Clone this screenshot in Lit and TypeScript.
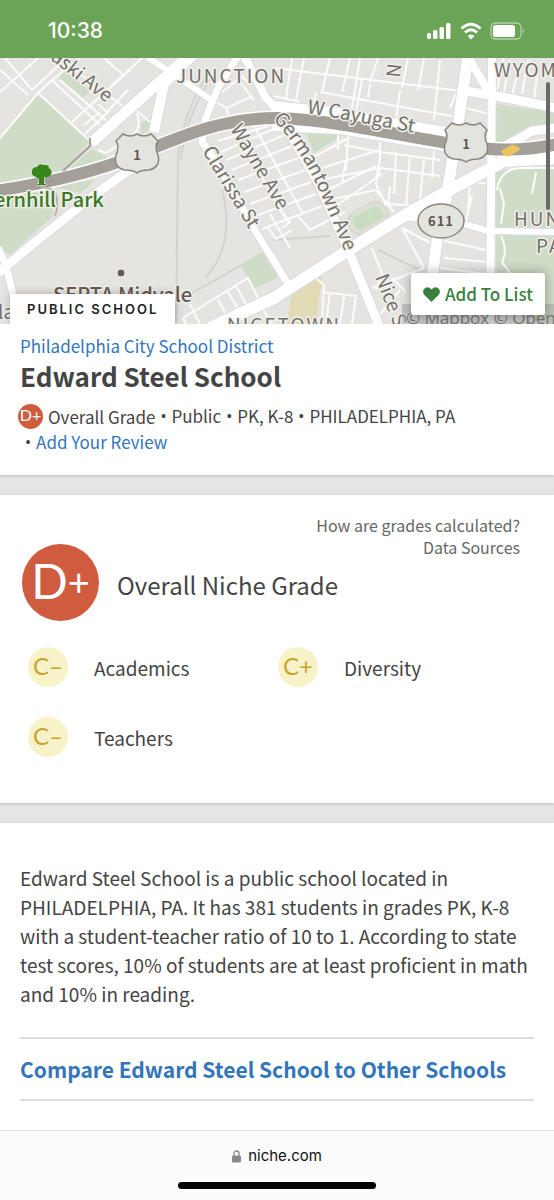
import { LitElement, html, svg, css } from "lit";
import { customElement, property } from "lit/decorators.js";

@customElement("grade-badge")
class GradeBadge extends LitElement {
  @property() grade = "";
  @property({ reflect: true }) size = "medium";

  static styles = css`
    :host {
      box-sizing: border-box;
      display: inline-flex;
      flex: none;
      align-items: center;
      justify-content: center;
      width: 40px;
      height: 40px;
      padding-bottom: 2px;
      border-radius: 50%;
      background: #f8f2c8;
      color: #c4a52e;
      font-family: Lato, "Noto Sans", sans-serif;
      font-size: 24px;
      line-height: 1;
    }
    :host([size="large"]) {
      width: 77px;
      height: 77px;
      padding-bottom: 4px;
      background: #cf5c3f;
      color: #fff;
      font-size: 48px;
    }
    :host([size="small"]) {
      width: 25px;
      height: 25px;
      background: #cf5c3f;
      color: #fff;
      font-size: 16px;
    }
    :host([size="large"]) .sign {
      font-size: 38px;
    }
  `;

  render() {
    return html`<span>${this.grade[0]}</span><span class="sign">${this.grade.slice(1)}</span>`;
  }
}

const MINOR_STREETS = [
  "M0 70 L28 95 M0 138 L38 93 L90 141 M5 58 L32 90 M0 92 L38 58 M32 90 L75 50 M38 93 L52 80 L80 58 M52 80 L100 125",
  "M60 80 L108 122 M70 66 L125 108 M72 122 L142 58 M90 106 L130 70 M98 104 L107 112 L128 90 M84 125 L100 112 M84 135 L110 110",
  "M98 150 L106 153 L133 135 Q142 128 137 114 M128 104 L150 122 M104 58 L122 74",
  "M210 98 L226 108 L229 116 M227 108 L253 96 M233 66 L250 85 M222 92 L240 78 M240 82 L254 100",
  "M215 130 L250 124 M218 141 L268 126 M221 152 L276 128 M226 160 L284 135 M232 170 L292 146 M238 180 L298 158 M244 192 L305 170 M250 204 L311 182 M255 216 L316 194 M262 229 L322 206",
  "M232 126 L288 222 M252 122 L302 212 M270 214 L290 248 M267 226 L276 239 L292 230",
  "M274 68 L470 92 M320 92 L462 118 M274 96 L300 102 M292 58 L286 98 M304 58 L296 100 M330 58 L322 92 M316 92 L314 106 M360 58 L352 108 M378 58 L370 82 M400 90 L396 120 M408 58 L402 88 M424 58 L418 90 M440 60 L434 120 M362 80 L356 112 M350 58 L342 92",
  "M370 84 L368 98 M466 108 L488 114 M466 72 L450 108 M338 128 L338 150 M348 135 L346 170 M344 145 L380 152 L440 160 M380 140 L380 160 L376 178 M312 158 L352 136 M322 168 L380 150 M320 180 L380 168 L440 176 M346 160 L342 182",
  "M380 168 L376 184 L386 206 M396 152 L394 194 M410 155 L406 206 M424 160 L420 200 M434 150 L432 178 M328 190 L376 166 M328 200 L376 190 M336 206 L382 174",
  "M376 190 L394 212 M390 186 L388 204 L420 206 M276 205 L290 222 L282 228 M298 216 L310 230 L345 212 M372 248 L382 274 L376 290 M372 288 L424 268 M402 228 L424 268 M402 228 L432 244",
  "M440 240 L486 250 M444 258 L486 262 M440 268 L486 274 M472 195 L466 222 M470 185 L468 208 M474 182 L490 184 M312 275 L324 285 L322 324 M322 292 L356 296 L352 324 M330 292 L326 324 M344 296 L340 324 M400 290 L372 324 M392 278 L406 292",
  "M183 318 L248 278 L258 298 M190 304 L200 324 M218 300 L230 322 M228 292 L240 312 M236 286 L248 308 M183 318 L188 328 M262 308 L272 324 M510 60 L504 92 M528 60 L522 94 M516 78 L512 96",
  "M503 58 L497 90 M538 70 L534 98 M497 190 Q500 170 518 168 L554 168 M500 188 L504 204 L501 224 M501 236 Q508 250 502 262 L512 276 M536 172 L532 194",
];

const ARTERIALS = [
  { d: "M91 143 L182 62 L200 50", w: 11 },
  { d: "M154 132 L158 112 L164 84 L194 54", w: 10 },
  { d: "M147 57 L170 72 L210 99", w: 6 },
  { d: "M238 56 L218 88 L205 120 L202 142 L212 155 L256 232 L288 284", w: 7 },
  { d: "M244 56 L266 98 L280 112", w: 8 },
  { d: "M-2 273 L34 243 L90 198 L132 168", w: 9 },
  { d: "M-2 248 L6 266 L14 298", w: 7 },
  { d: "M272 106 L330 112 L400 124 L450 133", w: 10 },
  { d: "M272 128 L340 131 L400 141 L450 149", w: 6 },
  { d: "M280 116 L318 182 L350 254 L379 326", w: 9 },
  { d: "M210 328 L274 298 L347 251 L407 214 L446 192 L504 161 L556 158", w: 12 },
  { d: "M468 56 L459 118 L447 194 L437 240 L431 286", w: 11 },
  { d: "M470 60 L492 98", w: 8 },
  { d: "M466 91 L507 98 L556 108", w: 9 },
  { d: "M492 56 L490 326", w: 8 },
  { d: "M404 217 L461 223 L488 231 L556 232", w: 6 },
  { d: "M506 146 L532 131 L556 128", w: 9 },
  { d: "M272 255 L286 280", w: 5 },
];

const HIGHWAY =
  "M-4 191 Q80 178 134 156 C190 132 230 117 282 118 C340 121 410 138 466 146 Q510 154 558 144";

@customElement("area-map")
class AreaMap extends LitElement {
  static styles = css`
    :host {
      display: block;
    }
    .map {
      display: block;
      width: 100%;
      height: 100%;
      font-family: "Noto Sans CJK SC", "Noto Sans", sans-serif;
    }
    .minor {
      fill: none;
      stroke: #fcfcfb;
      stroke-width: 2;
    }
    .casing {
      fill: none;
      stroke: #dadae6;
    }
    .road {
      fill: none;
      stroke: #fff;
    }
    .park {
      fill: #cfdcc7;
    }
    .rail {
      fill: none;
      stroke: #d3d2cd;
      stroke-width: 2;
    }
    .label {
      fill: #74706a;
      stroke: #f1f0ed;
      stroke-width: 3px;
      stroke-linejoin: round;
      paint-order: stroke;
      font-size: 19px;
    }
    .place {
      letter-spacing: 2px;
    }
    .green {
      fill: #39781f;
      font-size: 20px;
      font-weight: 500;
    }
    .dark {
      fill: #665a50;
      font-size: 20px;
      font-weight: 500;
    }
    .shield {
      fill: #e3e4de;
      stroke: #8b857e;
      stroke-width: 1.5;
    }
    .route {
      fill: #5d564f;
      font-size: 13px;
      font-weight: 700;
      text-anchor: middle;
    }
  `;

  private shield(x: number, y: number) {
    return svg`<g transform="translate(${x} ${y})">
      <path class="shield" d="M-14 -20 Q-7 -16 0 -20 Q7 -16 14 -20 L21 -13 Q17 -7 21 1 Q24 13 12 16 Q4 16 0 19 Q-4 16 -12 16 Q-24 13 -21 1 Q-17 -7 -21 -13 Z"></path>
      <text class="route" y="6">1</text>
    </g>`;
  }

  render() {
    return html`
      <svg class="map" viewBox="0 58 554 266" preserveAspectRatio="xMidYMid slice" role="img" aria-label="Map of the area around the school">
        <rect x="-400" y="-200" width="1400" height="800" fill="#e5e4e1"></rect>
        <g class="park">
          <path d="M38 93 L90 141 L63 171 L0 184 V138 Z"></path>
          <path d="M64 70 L90 91 L83 98 L59 78 Z"></path>
          <path d="M66 171 L92 149 L110 159 Z"></path>
          <path d="M0 194 L48 186 L54 215 L10 255 L0 248 Z M50 186 L95 180 L80 193 Z"></path>
          <path d="M140 124 L150 118 L152 128 L142 134 Z"></path>
          <path d="M304 128 L349 131 L314 153 Z"></path>
          <path d="M496 104 L554 112 V128 L514 146 L496 144 Z"></path>
          <path d="M496 171 L554 166 V324 L530 318 L496 270 Z"></path>
          <path d="M240 265 L263 252 L277 278 L255 288 Z"></path>
          <path d="M272 262 L280 274 L272 280 Z"></path>
        </g>
        <path d="M292 288 L322 274 L316 326 H287 Z" fill="#e1dcb6"></path>
        <g transform="rotate(-28 368 218)">
          <rect x="347" y="206" width="42" height="24" rx="12" fill="#dcdfd4" stroke="#cbd3c2"></rect>
          <rect x="353" y="211" width="30" height="14" rx="4" fill="#c9dcc2"></rect>
        </g>
        <path class="rail" d="M176 326 L178 160 Q180 120 208 74 M181 160 Q184 120 212 76 M222 190 Q236 245 205 278 M180 300 L240 266 M274 240 L330 236 M378 250 L420 270"></path>
        ${MINOR_STREETS.map((d) => svg`<path class="minor" d=${d}></path>`)}
        ${ARTERIALS.map((r) => svg`<path class="casing" d=${r.d} stroke-width=${r.w + 2}></path>`)}
        ${ARTERIALS.map((r) => svg`<path class="road" d=${r.d} stroke-width=${r.w}></path>`)}
        <path class="road" d=${HIGHWAY} stroke-width="15"></path>
        <path d=${HIGHWAY} fill="none" stroke="#a59f9a" stroke-width="12"></path>
        <path d="M63 171 L90 146 V138" fill="none" stroke="#a59f9a" stroke-width="2"></path>
        <path d="M40 186 L54 190 Q60 202 55 216" fill="none" stroke="#b8b3ae" stroke-width="2"></path>
        <path d="M504 152 L513 147 L517 149 L508 154 Z" fill="#eac45c" stroke="#eac45c" stroke-width="5" stroke-linejoin="round"></path>

        <path id="cayuga" d="M307 113 Q360 122 430 136" fill="none"></path>
        <path id="germantown" d="M273 119 Q302 152 318 188 Q336 228 352 270" fill="none"></path>
        <path id="wayne" d="M230 129 L290 230" fill="none"></path>
        <path id="clarissa" d="M202 151 L264 254" fill="none"></path>
        <path id="nice" d="M375 277 L404 352" fill="none"></path>

        <text class="label place" x="176" y="83">JUNCTION</text>
        <text class="label place" x="494" y="77">WYOMING</text>
        <text class="label place" x="514" y="226">HUNTING</text>
        <text class="label place" x="536" y="253">PARK</text>
        <text class="label place" x="227" y="332">NICETOWN</text>
        <text class="label" transform="translate(50 59) rotate(38)">aski Ave</text>
        <text class="label" transform="translate(400 78) rotate(-84)">N 17th</text>
        <text class="label"><textPath href="#cayuga">W Cayuga St</textPath></text>
        <text class="label"><textPath href="#germantown">Germantown Ave</textPath></text>
        <text class="label"><textPath href="#wayne">Wayne Ave</textPath></text>
        <text class="label"><textPath href="#clarissa">Clarissa St</textPath></text>
        <text class="label"><textPath href="#nice">Nice St</textPath></text>
        <text class="label" x="-2" y="319">la</text>
        <text class="label green" x="-6" y="207">ernhill Park</text>
        <text class="label dark" x="53" y="302">SEPTA Midvale</text>
        <circle cx="121" cy="273" r="4" fill="#665a50" stroke="#f1f0ed"></circle>

        <path fill="#39861d" stroke="#eef2ea" stroke-width="1" paint-order="stroke" d="M39 184 V179 L34 176 Q31 175 32 171 Q32 167 37 167 Q39 163 43 165 Q49 164 49 168 Q53 171 51 175 Q48 179 44 177 V184 H46 V185 H37 V184 Z"></path>
        ${this.shield(137, 154)} ${this.shield(466, 143)}
        <ellipse cx="441" cy="221" rx="23" ry="17" class="shield"></ellipse>
        <text class="route" x="441" y="226" letter-spacing="1">611</text>
      </svg>
    `;
  }
}

@customElement("app-root")
class AppRoot extends LitElement {
  static styles = css`
    :host {
      display: flex;
      flex-direction: column;
      min-height: 100vh;
      background: #e5e5e5;
      color: #444;
      font-family: "Noto Sans CJK SC", "Noto Sans", sans-serif;
      font-size: 17px;
      line-height: 25px;
    }
    * {
      box-sizing: border-box;
    }
    h1,
    h2,
    p,
    ul {
      margin: 0;
      padding: 0;
      font-weight: inherit;
    }
    a {
      color: #3375bb;
      text-decoration: none;
    }
    .status {
      display: flex;
      align-items: center;
      justify-content: space-between;
      height: 58px;
      padding: 4px 28px 0 48px;
      background: #6ba357;
      color: #fff;
      font: 500 21px/24px Inter, sans-serif;
    }
    .status-icons {
      display: flex;
      align-items: center;
      gap: 8px;
    }
    .hero {
      position: relative;
      height: 266px;
      overflow: hidden;
    }
    .map {
      height: 100%;
    }
    .tag {
      position: absolute;
      left: 10px;
      bottom: 0;
      padding: 0 17px;
      background: #fff;
      box-shadow: 0 0 10px rgba(0, 0, 0, 0.25);
      color: #222;
      font: 600 13px/30px Inter, sans-serif;
      letter-spacing: 2px;
    }
    .attribution {
      position: absolute;
      left: 402px;
      right: 0;
      bottom: 0;
      height: 20px;
      padding-left: 4px;
      overflow: hidden;
      background: rgba(160, 160, 160, 0.5);
      color: #777;
      font: 17px/28px "Open Sans", sans-serif;
      white-space: nowrap;
    }
    .add {
      position: absolute;
      right: 9px;
      bottom: 9px;
      display: flex;
      align-items: center;
      gap: 5px;
      height: 42px;
      padding: 0 12px;
      border: 0;
      border-radius: 3px;
      background: #fff;
      box-shadow: 0 0 12px rgba(0, 0, 0, 0.35);
      color: #37803f;
      font: 500 17px/24px "Noto Sans CJK SC", sans-serif;
      white-space: nowrap;
    }
    .scroll-thumb {
      position: absolute;
      top: 24px;
      right: 4px;
      width: 4px;
      height: 128px;
      border-radius: 2px;
      background: #6a6a68;
    }
    .card {
      background: #fff;
      box-shadow: 0 1px 3px rgba(0, 0, 0, 0.2);
    }
    .intro {
      padding: 9px 20px 20px;
      margin-bottom: 20px;
    }
    .name {
      margin: 1px 0 10px;
      font-size: 26px;
      font-weight: 700;
      line-height: 34px;
    }
    .facts {
      display: flex;
      flex-wrap: wrap;
      align-items: center;
      column-gap: 5px;
      margin-left: -2px;
      list-style: none;
    }
    .facts li {
      display: flex;
      align-items: baseline;
      gap: 5px;
    }
    .facts .overall-grade {
      align-items: center;
    }
    .facts li + li::before {
      content: "•";
      font-family: Roboto, sans-serif;
      font-size: 18px;
    }
    .facts .review {
      flex-basis: 100%;
      padding-left: 7px;
    }
    .grades {
      padding: 19px 20px 46px;
      margin-bottom: 20px;
    }
    .notes {
      display: flex;
      flex-direction: column;
      align-items: flex-end;
      padding-right: 14px;
      font-size: 16px;
      line-height: 22px;
    }
    .notes a {
      color: #666;
    }
    .overall {
      display: flex;
      align-items: center;
      gap: 18px;
      padding-left: 2px;
      margin-top: -14px;
      font-size: 24px;
      line-height: 30px;
    }
    .overall h2 {
      padding-top: 4px;
      font-size: inherit;
    }
    .subjects {
      display: grid;
      grid-template-columns: 250px 1fr;
      row-gap: 30px;
      padding-left: 8px;
      margin-top: 26px;
      font-size: 19px;
      list-style: none;
    }
    .subjects li {
      display: flex;
      align-items: center;
      gap: 26px;
    }
    .about {
      flex: 1;
      padding: 40px 20px 27px;
    }
    .summary {
      font-size: 19px;
      line-height: 29px;
    }
    .compare {
      display: block;
      margin-top: 29px;
      padding: 15px 0;
      border: solid #ddd;
      border-width: 2px 0;
      font-size: 21px;
      font-weight: 700;
      line-height: 30px;
    }
    .browser {
      display: flex;
      flex-direction: column;
      align-items: center;
      justify-content: space-between;
      height: 70px;
      padding: 15px 0 11px;
      border-top: 1px solid #e0e0e0;
      background: #fcfcfc;
      color: #111;
      font: 15px/20px Inter, sans-serif;
    }
    .address {
      display: flex;
      align-items: center;
      gap: 7px;
    }
    .home {
      width: 198px;
      height: 7px;
      border-radius: 4px;
      background: #000;
    }
  `;

  private subjects = [
    { grade: "C–", name: "Academics" },
    { grade: "C+", name: "Diversity" },
    { grade: "C–", name: "Teachers" },
  ];

  render() {
    return html`
      <header class="status">
        <time>10:38</time>
        <div class="status-icons">
          <svg width="26" height="18" viewBox="0 0 26 18" fill="#fff">
            <rect x="1" y="11" width="4" height="6" rx="1.5"></rect>
            <rect x="7" y="8" width="4.500" height="9" rx="1.5"></rect>
            <rect x="13.500" y="5" width="4.500" height="12" rx="1.5"></rect>
            <rect x="20" y="1" width="4.500" height="16" rx="1.5"></rect>
          </svg>
          <svg width="22" height="18" viewBox="0 0 22 18" fill="none" stroke="#fff" stroke-width="3">
            <path d="M1.5 6.5 Q11 -2 20.500 6.500"></path>
            <path d="M5 10.500 Q11 5 17 10.500"></path>
            <path d="M11 17.500 L7.500 14 Q11 11 14.500 14 Z" fill="#fff" stroke="none"></path>
          </svg>
          <svg width="36" height="18" viewBox="0 0 36 18">
            <rect x="1" y="1" width="30" height="16" rx="4.500" fill="none" stroke="#b5d1ab" stroke-width="1.300"></rect>
            <rect x="3" y="3" width="22" height="12" rx="2.500" fill="#fff"></rect>
            <path d="M33 6.500 Q35.500 9 33 11.500 Z" fill="#b5d1ab"></path>
          </svg>
        </div>
      </header>

      <section class="hero">
        <area-map class="map"></area-map>
        <div class="attribution">© Mapbox © OpenStreetMap</div>
        <span class="tag">PUBLIC SCHOOL</span>
        <button class="add" type="button">
          <svg width="17" height="15" viewBox="0 0 17 15" fill="#37803f" aria-hidden="true">
            <path d="M8.500 15 L1.500 8 Q-1 5 1 2 Q4.500 -1.500 8.500 2.500 Q12.500 -1.500 16 2 Q18 5 15.500 8 Z"></path>
          </svg>
          Add To List
        </button>
        <div class="scroll-thumb"></div>
      </section>

      <section class="card intro">
        <a href="#district">Philadelphia City School District</a>
        <h1 class="name">Edward Steel School</h1>
        <ul class="facts">
          <li class="overall-grade">
            <grade-badge size="small" grade="D+"></grade-badge>Overall Grade
          </li>
          <li>Public</li>
          <li>PK, K-8</li>
          <li>PHILADELPHIA, PA</li>
          <li class="review"><a href="#review">Add Your Review</a></li>
        </ul>
      </section>

      <section class="card grades">
        <nav class="notes">
          <a href="#grades">How are grades calculated?</a>
          <a href="#sources">Data Sources</a>
        </nav>
        <div class="overall">
          <grade-badge size="large" grade="D+"></grade-badge>
          <h2>Overall Niche Grade</h2>
        </div>
        <ul class="subjects">
          ${this.subjects.map(
            (s) => html`<li><grade-badge grade=${s.grade}></grade-badge>${s.name}</li>`
          )}
        </ul>
      </section>

      <section class="card about">
        <p class="summary">
          Edward Steel School is a public school located in PHILADELPHIA, PA. It has 381 students in
          grades PK, K-8 with a student-teacher ratio of 10 to 1. According to state test scores,
          10% of students are at least proficient in math and 10% in reading.
        </p>
        <a class="compare" href="#compare">Compare Edward Steel School to Other Schools</a>
      </section>

      <footer class="browser">
        <div class="address">
          <svg width="9" height="13" viewBox="0 0 9 13" aria-hidden="true">
            <path d="M2 6 V3.500 Q2 1 4.500 1 Q7 1 7 3.500 V6" fill="none" stroke="#8a8a8a" stroke-width="1.300"></path>
            <rect y="5.500" width="9" height="7" rx="1.200" fill="#8a8a8a"></rect>
          </svg>
          niche.com
        </div>
        <div class="home"></div>
      </footer>
    `;
  }
}
